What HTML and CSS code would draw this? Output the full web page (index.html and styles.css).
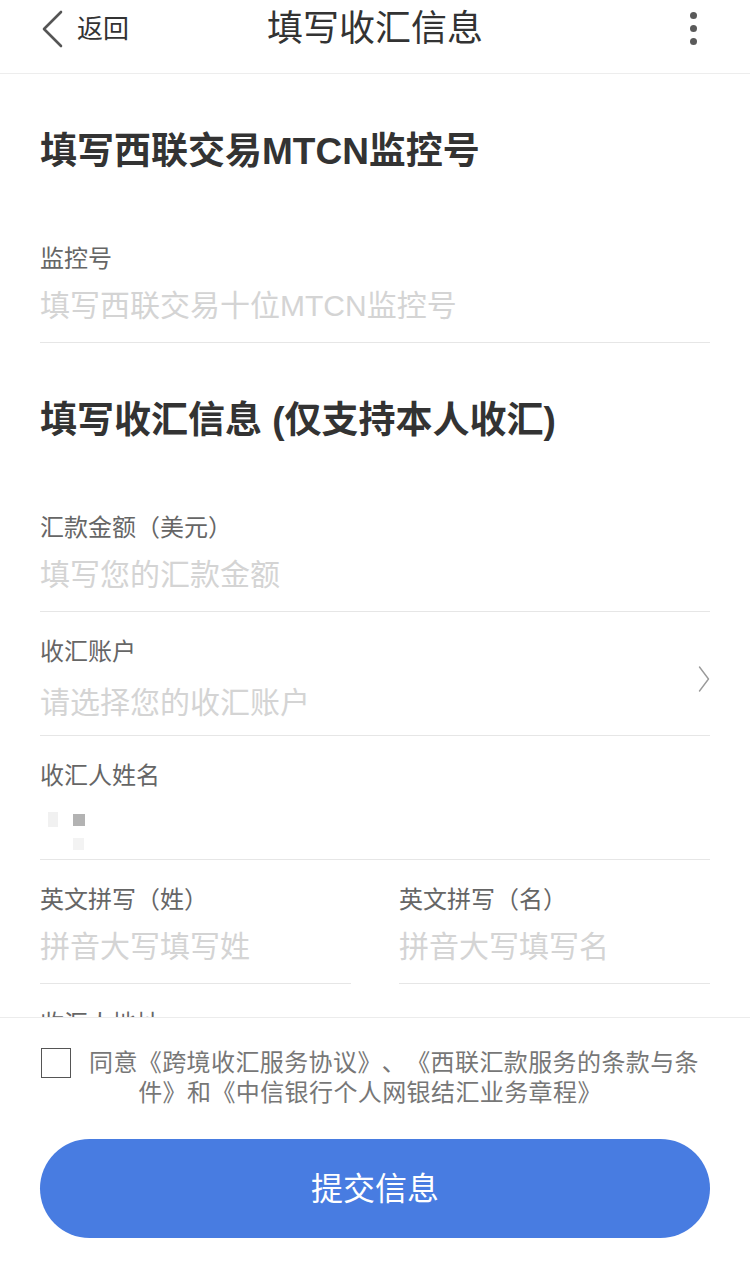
FILE: index.html
```html
<!DOCTYPE html>
<html lang="zh-CN">
<head>
<meta charset="utf-8">
<title>填写收汇信息</title>
<link rel="stylesheet" href="styles.css">
</head>
<body>
<header class="topbar">
  <div class="back">
    <svg class="back-icon" width="22" height="38" viewBox="0 0 22 38" aria-hidden="true">
      <path d="M20 2 L3 19 L20 36" fill="none" stroke="#555" stroke-width="2.6" stroke-linecap="round" stroke-linejoin="round"/>
    </svg>
    <span class="back-text">返回</span>
  </div>
  <h1 class="title">填写收汇信息</h1>
  <div class="more" aria-label="更多">
    <span class="dot"></span><span class="dot"></span><span class="dot"></span>
  </div>
</header>

<main class="content">
  <section class="section">
    <h2 class="section-title">填写西联交易MTCN监控号</h2>
    <div class="field">
      <div class="label">监控号</div>
      <div class="placeholder">填写西联交易十位MTCN监控号</div>
    </div>
  </section>

  <section class="section">
    <h2 class="section-title">填写收汇信息 (仅支持本人收汇)</h2>
    <div class="field">
      <div class="label">汇款金额（美元）</div>
      <div class="placeholder">填写您的汇款金额</div>
    </div>
    <div class="field field-select">
      <div class="field-body">
        <div class="label">收汇账户</div>
        <div class="placeholder placeholder-select">请选择您的收汇账户</div>
      </div>
      <svg class="chevron" width="12" height="28" viewBox="0 0 12 28" aria-hidden="true">
        <path d="M1.5 2 L10.5 14 L1.5 26" fill="none" stroke="#9a9a9a" stroke-width="1.4" stroke-linecap="round" stroke-linejoin="round"/>
      </svg>
    </div>
    <div class="field">
      <div class="label">收汇人姓名</div>
      <div class="name-mask">
        <span class="mask mask-a"></span>
        <span class="mask mask-b"></span>
        <span class="mask mask-c"></span>
      </div>
    </div>
    <div class="field-pair">
      <div class="field">
        <div class="label">英文拼写（姓）</div>
        <div class="placeholder">拼音大写填写姓</div>
      </div>
      <div class="field">
        <div class="label">英文拼写（名）</div>
        <div class="placeholder">拼音大写填写名</div>
      </div>
    </div>
    <div class="field">
      <div class="label">收汇人地址</div>
      <div class="placeholder">请填写您的收汇地址</div>
    </div>
  </section>
</main>

<footer class="bottom-panel">
  <p class="agree"><span class="checkbox"></span>同意《跨境收汇服务协议》、《西联汇款服务的条款与条件》和《中信银行个人网银结汇业务章程》</p>
  <button class="submit" type="button">提交信息</button>
</footer>
</body>
</html>
```

FILE: styles.css
```css
* {
  box-sizing: border-box;
}

html, body {
  margin: 0;
  padding: 0;
  background: #ffffff;
}

body {
  font-family: "Liberation Sans", "Noto Sans CJK SC", sans-serif;
  color: #333333;
  width: 750px;
  min-height: 1279px;
  text-spacing-trim: space-all;
}

/* ---------- Top bar ---------- */
.topbar {
  height: 74px;
  padding-bottom: 16px;
  border-bottom: 1px solid #ededed;
  display: grid;
  grid-template-columns: 1fr auto 1fr;
  align-items: center;
}

.back {
  display: flex;
  align-items: center;
  gap: 14px;
  padding-left: 41px;
}

.back-icon {
  display: block;
}

.back-text {
  font-size: 26px;
  line-height: 34px;
  color: #333333;
}

.title {
  margin: 0;
  font-size: 36px;
  line-height: 44px;
  font-weight: 400;
  color: #333333;
}

.more {
  justify-self: end;
  padding-right: 53px;
  display: flex;
  flex-direction: column;
  gap: 6px;
}

.dot {
  display: block;
  width: 7px;
  height: 7px;
  border-radius: 50%;
  background: #5a5a5a;
}

/* ---------- Content ---------- */
.content {
  padding: 0 40px 200px;
}

.section-title {
  margin: 0;
  padding: 53px 0 42px;
  font-size: 37px;
  line-height: 50px;
  font-weight: 600;
  color: #333333;
}

.field {
  padding: 23px 0 16px;
  border-bottom: 1px solid #e6e6e6;
}

.label {
  font-size: 24px;
  line-height: 34px;
  color: #666666;
  margin-bottom: 10px;
}

.placeholder {
  font-size: 30px;
  line-height: 40px;
  color: #d4d4d4;
}

.field-select {
  display: flex;
  align-items: center;
  padding-bottom: 12px;
}

.field-body {
  flex: 1;
}

.placeholder-select {
  padding-top: 4px;
}

.chevron {
  display: block;
}

.name-mask {
  position: relative;
  height: 40px;
}

.mask {
  position: absolute;
  display: block;
}

.mask-a {
  left: 8px;
  top: 9px;
  width: 10px;
  height: 15px;
  background: #f1f1f1;
}

.mask-b {
  left: 33px;
  top: 11px;
  width: 12px;
  height: 12px;
  background: #b3b3b3;
}

.mask-c {
  left: 33px;
  top: 35px;
  width: 11px;
  height: 12px;
  background: #f3f3f3;
}

.field-pair {
  display: grid;
  grid-template-columns: 1fr 1fr;
  column-gap: 48px;
}

/* ---------- Bottom panel ---------- */
.bottom-panel {
  position: fixed;
  left: 0;
  right: 0;
  bottom: 0;
  height: 262px;
  padding: 30px 40px 0;
  background: #ffffff;
  border-top: 1px solid #ececec;
}

.agree {
  margin: 0;
  padding-right: 10px;
  font-size: 24px;
  line-height: 30px;
  letter-spacing: 0.4px;
  color: #777777;
  text-align: center;
}

.checkbox {
  display: inline-block;
  width: 30px;
  height: 30px;
  border: 1.5px solid #555555;
  vertical-align: top;
  margin-right: 18px;
}

.submit {
  display: block;
  width: 100%;
  height: 99px;
  margin-top: 31px;
  border: none;
  border-radius: 50px;
  background: #487ce1;
  color: #ffffff;
  font-family: "Liberation Sans", "Noto Sans CJK SC", sans-serif;
  font-size: 32px;
  line-height: 40px;
  padding: 0;
}
```
